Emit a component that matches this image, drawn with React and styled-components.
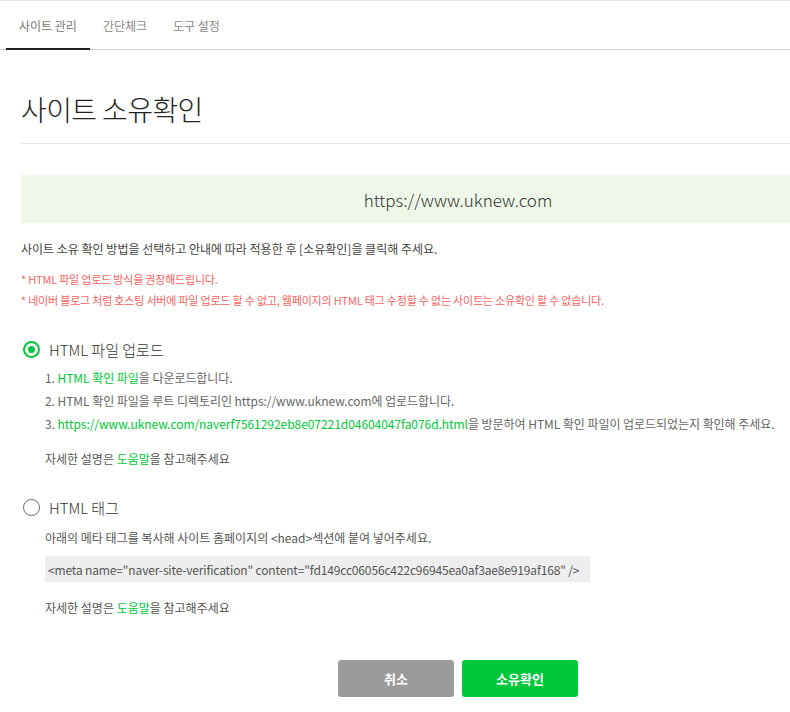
import React, { useState } from 'react'
import styled, { createGlobalStyle } from 'styled-components'

const GlobalStyle = createGlobalStyle`
  html, body {
    margin: 0;
    padding: 0;
    background: #fff;
    overflow: hidden;
  }
  body {
    font-family: "Noto Sans CJK KR", "Noto Sans", sans-serif;
    color: #333;
  }
`

const tabs = ['사이트 관리', '간단체크', '도구 설정']

function App() {
  const [method, setMethod] = useState('file')

  return (
    <>
      <GlobalStyle />
      <Page>
        <TabBar>
          {tabs.map((t, i) => (
            <Tab key={t} active={i === 0}>{t}</Tab>
          ))}
        </TabBar>

        <Content>
          <Title>사이트 소유확인</Title>
          <Divider />

          <SiteBox>https://www.uknew.com</SiteBox>

          <Desc>사이트 소유 확인 방법을 선택하고 안내에 따라 적용한 후 [소유확인]을 클릭해 주세요.</Desc>
          <Notes>
            <Note>* HTML 파일 업로드 방식을 권장해드립니다.</Note>
            <Note>* 네이버 블로그 처럼 호스팅 서버에 파일 업로드 할 수 없고, 웹페이지의 HTML 태그 수정할 수 없는 사이트는 소유확인 할 수 없습니다.</Note>
          </Notes>

          <Option>
            <RadioRow onClick={() => setMethod('file')}>
              <Radio checked={method === 'file'} />
              <OptionLabel>HTML 파일 업로드</OptionLabel>
            </RadioRow>
            <Steps>
              <Step>1. <Link>HTML 확인 파일</Link>을 다운로드합니다.</Step>
              <Step>2. HTML 확인 파일을 루트 디렉토리인 https://www.uknew.com에 업로드합니다.</Step>
              <Step>3. <Link>https://www.uknew.com/naverf7561292eb8e07221d04604047fa076d.html</Link>을 방문하여 HTML 확인 파일이 업로드되었는지 확인해 주세요.</Step>
            </Steps>
            <Help>자세한 설명은 <Link>도움말</Link>을 참고해주세요</Help>
          </Option>

          <Option second>
            <RadioRow onClick={() => setMethod('tag')}>
              <Radio checked={method === 'tag'} />
              <OptionLabel>HTML 태그</OptionLabel>
            </RadioRow>
            <TagDesc>아래의 메타 태그를 복사해 사이트 홈페이지의 &lt;head&gt;섹션에 붙여 넣어주세요.</TagDesc>
            <CodeBox>&lt;meta name="naver-site-verification" content="fd149cc06056c422c96945ea0af3ae8e919af168" /&gt;</CodeBox>
            <Help>자세한 설명은 <Link>도움말</Link>을 참고해주세요</Help>
          </Option>

          <Buttons>
            <Button>취소</Button>
            <Button primary>소유확인</Button>
          </Buttons>
        </Content>
      </Page>
    </>
  )
}

export default App

const Page = styled.div`
  width: 960px;
  min-height: 712px;
`

const TabBar = styled.div`
  display: flex;
  height: 48px;
  border-top: 1px solid #e6e6e6;
  border-bottom: 1px solid #cfcfcf;
  padding-left: 6px;
`

const Tab = styled.div`
  display: flex;
  align-items: center;
  padding: 1px 13px 0;
  font-size: 12px;
  color: ${p => (p.active ? '#777' : '#888')};
  border-bottom: 2px solid ${p => (p.active ? '#222' : 'transparent')};
  margin-bottom: -1px;
`

const Content = styled.div`
  width: 874px;
  margin-left: 21px;
`

const Title = styled.h1`
  margin: 0;
  padding-top: 39px;
  height: 54px;
  font-size: 28px;
  font-weight: 300;
  color: #222;
  letter-spacing: -0.6px;
  line-height: 40px;
`

const Divider = styled.div`
  height: 1px;
  background: #e5e5e5;
`

const SiteBox = styled.div`
  margin-top: 31px;
  height: 48px;
  display: flex;
  align-items: center;
  justify-content: center;
  background: #eff8e8;
  font-size: 17px;
  font-weight: 300;
  color: #333;
`

const Desc = styled.p`
  margin: 17px 0 0;
  font-size: 12px;
  line-height: 18px;
  color: #444;
`

const Notes = styled.div`
  margin-top: 12px;
  display: flex;
  flex-direction: column;
  gap: 3px;
`

const Note = styled.div`
  font-size: 11px;
  line-height: 18px;
  letter-spacing: -0.2px;
  color: #ff5f5f;
`

const Option = styled.div`
  margin-top: ${p => (p.second ? '28px' : '29px')};
`

const RadioRow = styled.label`
  display: flex;
  align-items: center;
  gap: 9px;
  cursor: pointer;
  height: 22px;
`

const Radio = styled.span`
  box-sizing: border-box;
  width: 17px;
  height: 17px;
  margin-left: 2px;
  border-radius: 50%;
  border: ${p => (p.checked ? '2px solid #00c73c' : '1.5px solid #666')};
  display: flex;
  align-items: center;
  justify-content: center;
  &::after {
    content: '';
    width: 7px;
    height: 7px;
    border-radius: 50%;
    background: #00c73c;
    display: ${p => (p.checked ? 'block' : 'none')};
  }
`

const OptionLabel = styled.span`
  font-size: 15px;
  font-weight: 300;
  color: #333;
`

const Steps = styled.div`
  margin-top: 9px;
  padding-left: 24px;
  display: flex;
  flex-direction: column;
  gap: 5px;
`

const Step = styled.div`
  font-size: 12px;
  line-height: 18px;
  letter-spacing: -0.05px;
  color: #666;
`

const Link = styled.span`
  color: #00c73c;
  cursor: pointer;
`

const Help = styled.div`
  margin-top: 17px;
  padding-left: 24px;
  font-size: 12px;
  line-height: 18px;
  color: #555;
`

const TagDesc = styled.div`
  margin-top: 11px;
  padding-left: 24px;
  font-size: 12px;
  line-height: 18px;
  color: #555;
`

const CodeBox = styled.div`
  margin: 9px 0 0 24px;
  width: 545px;
  height: 26px;
  box-sizing: border-box;
  padding-left: 3px;
  display: flex;
  align-items: center;
  background: #eee;
  font-size: 12px;
  letter-spacing: -0.15px;
  color: #555;
  white-space: nowrap;
`

const Buttons = styled.div`
  margin-top: 43px;
  display: flex;
  justify-content: center;
  gap: 8px;
`

const Button = styled.button`
  width: 116px;
  height: 37px;
  border: none;
  border-radius: 3px;
  background: ${p => (p.primary ? '#00c73c' : '#9b9b9b')};
  color: #fff;
  font-family: inherit;
  font-size: 13px;
  font-weight: 700;
  cursor: pointer;
`
